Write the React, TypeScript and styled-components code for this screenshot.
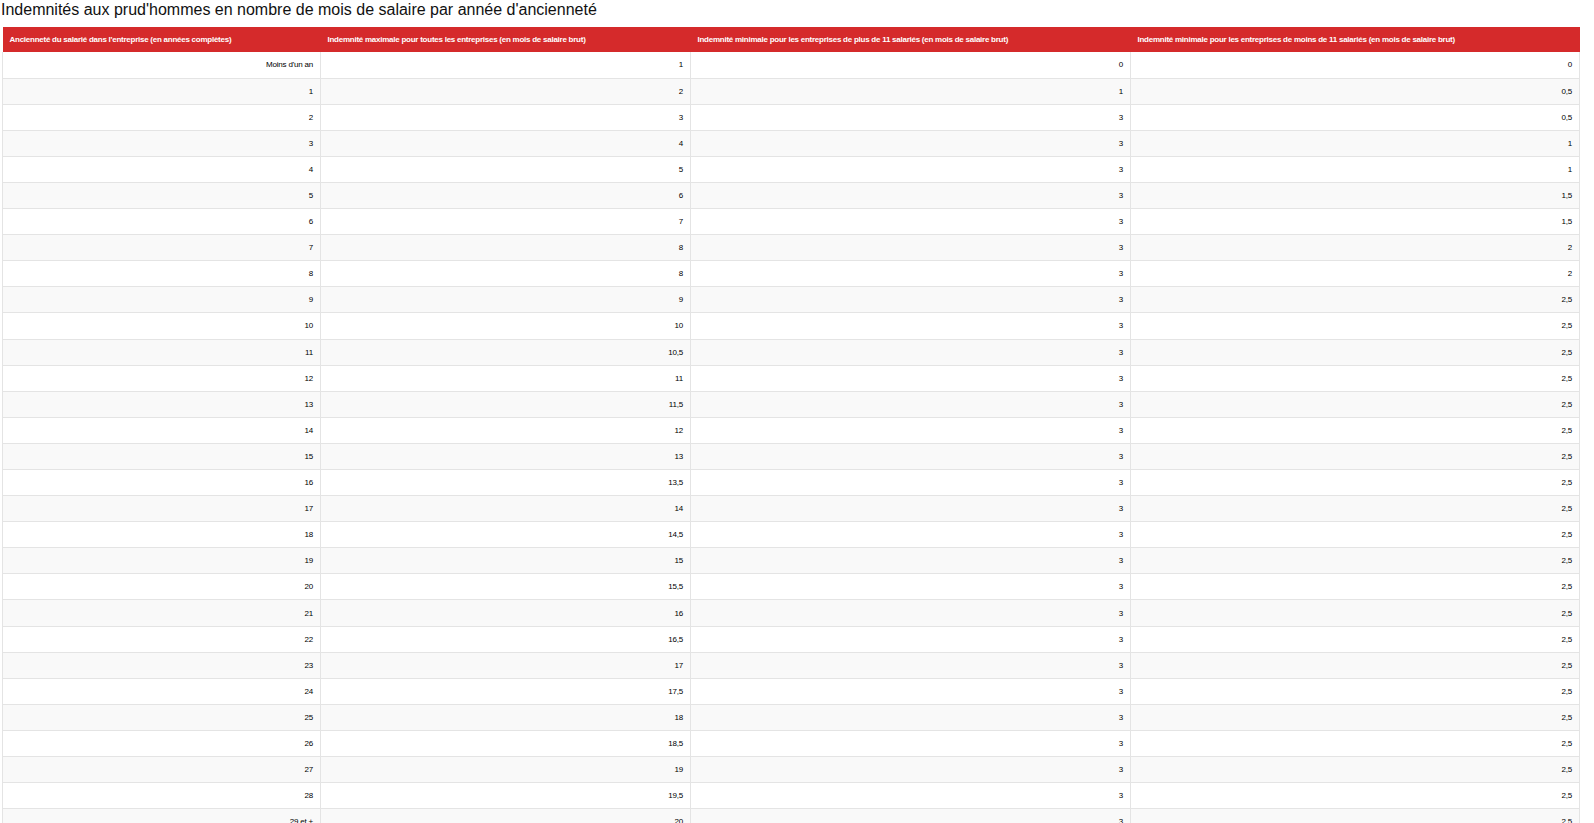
import React from 'react'
import styled, { createGlobalStyle } from 'styled-components'

const GlobalStyle = createGlobalStyle`
  html, body {
    margin: 0;
    padding: 0;
    background: #fff;
  }
  body {
    font-family: "Liberation Sans", Arial, sans-serif;
  }
`

const Page = styled.div`
  padding: 1px 0 0 0;
`

const Title = styled.div`
  font-size: 16px;
  line-height: 18px;
  color: #111;
  margin: 0 0 8px 1px;
`

const Table = styled.table`
  border-collapse: collapse;
  table-layout: fixed;
  width: 1577px;
  margin-left: 2px;
`

const Col = styled.col<{ $width: number }>`
  width: ${(p) => p.$width}px;
`

const HeadRow = styled.tr`
  height: 25px;
  background: #d52a2b;
`

const HeadCell = styled.th`
  padding: 0 7px;
  text-align: left;
  font-size: 8px;
  font-weight: bold;
  letter-spacing: -0.25px;
  color: #fff;
  white-space: nowrap;
  overflow: hidden;
`

const Row = styled.tr<{ $striped: boolean }>`
  height: 26.1px;
  background: ${(p) => (p.$striped ? '#f9f9f9' : '#fff')};
`

const Cell = styled.td`
  padding: 0 7px;
  text-align: right;
  font-size: 8px;
  letter-spacing: -0.2px;
  color: #000;
  border: 1px solid #e4e4e4;
  border-top: none;
  white-space: nowrap;
`

const columns = [
  { label: "Ancienneté du salarié dans l'entreprise (en années complètes)", width: 318 },
  { label: 'Indemnité maximale pour toutes les entreprises (en mois de salaire brut)', width: 370 },
  { label: 'Indemnité minimale pour les entreprises de plus de 11 salariés (en mois de salaire brut)', width: 440 },
  { label: 'Indemnité minimale pour les entreprises de moins de 11 salariés (en mois de salaire brut)', width: 449 },
]

const maxValues = [
  '1', '2', '3', '4', '5', '6', '7', '8', '8', '9', '10', '10,5', '11', '11,5', '12',
  '13', '13,5', '14', '14,5', '15', '15,5', '16', '16,5', '17', '17,5', '18', '18,5', '19', '19,5', '20',
]
const minSmall = ['0', '0,5', '0,5', '1', '1', '1,5', '1,5', '2', '2']

const rows = maxValues.map((max, i) => [
  i === 0 ? "Moins d'un an" : i === 29 ? '29 et +' : String(i),
  max,
  i === 0 ? '0' : i === 1 ? '1' : '3',
  i < minSmall.length ? minSmall[i] : '2,5',
])

export default function App() {
  return (
    <Page>
      <GlobalStyle />
      <Title>Indemnités aux prud'hommes en nombre de mois de salaire par année d'ancienneté</Title>
      <Table>
        <colgroup>
          {columns.map((c) => (
            <Col key={c.label} $width={c.width} />
          ))}
        </colgroup>
        <thead>
          <HeadRow>
            {columns.map((c) => (
              <HeadCell key={c.label}>{c.label}</HeadCell>
            ))}
          </HeadRow>
        </thead>
        <tbody>
          {rows.map((r, i) => (
            <Row key={i} $striped={i % 2 === 1}>
              {r.map((v, j) => (
                <Cell key={j}>{v}</Cell>
              ))}
            </Row>
          ))}
        </tbody>
      </Table>
    </Page>
  )
}
